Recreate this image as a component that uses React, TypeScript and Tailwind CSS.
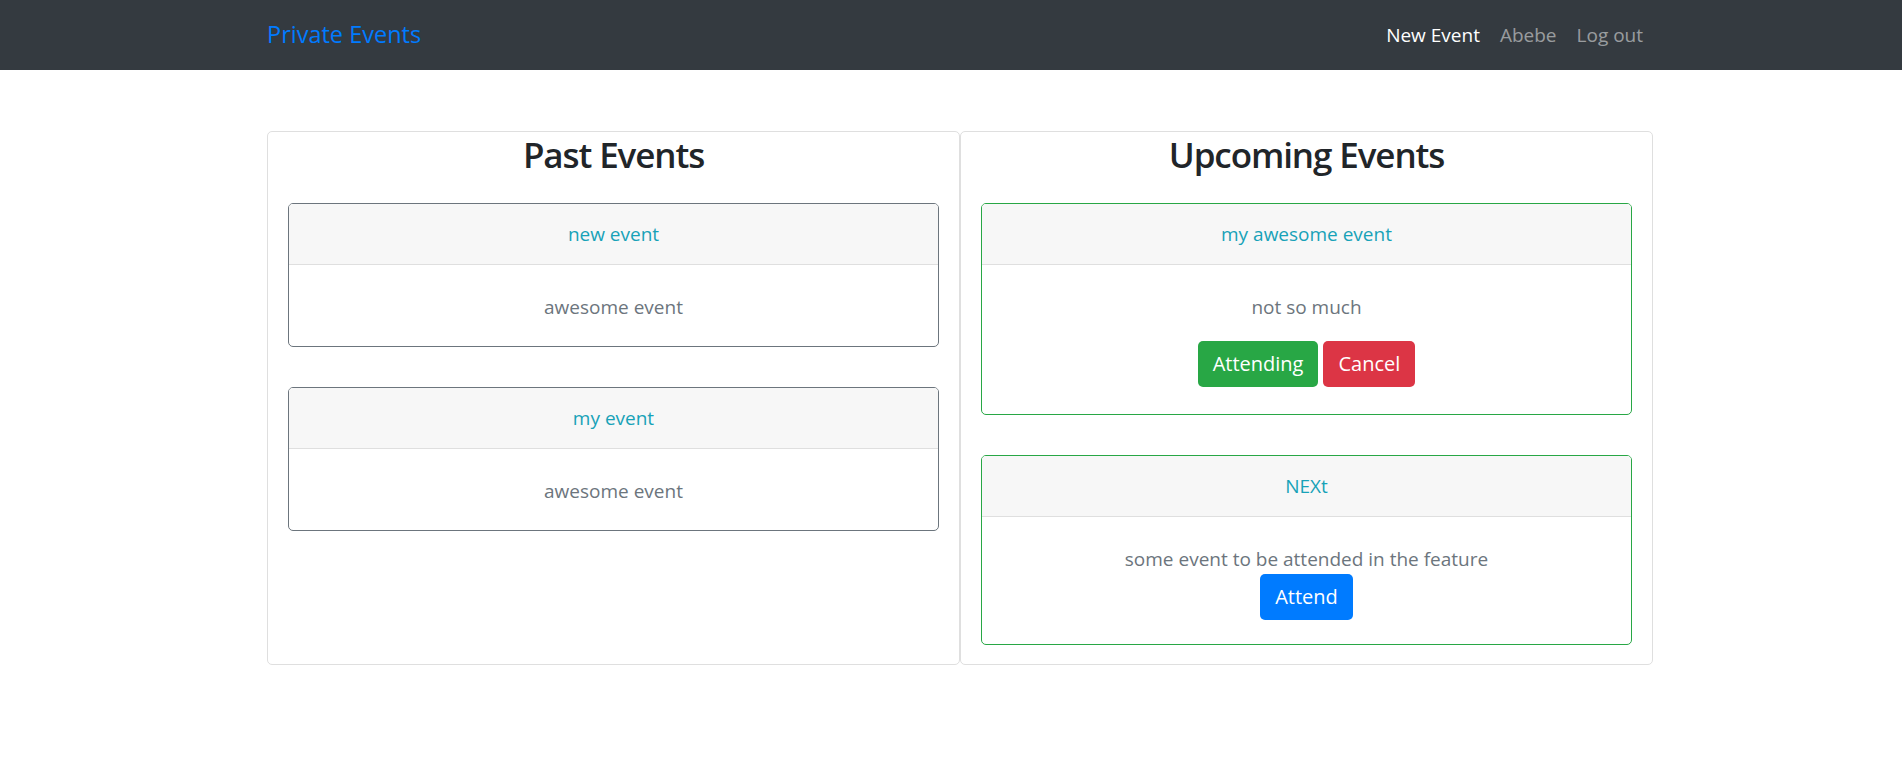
import React from 'react';

type EventItem = {
  title: string;
  description: string;
  actions?: 'attending' | 'attend';
};

const pastEvents: EventItem[] = [
  { title: 'new event', description: 'awesome event' },
  { title: 'my event', description: 'awesome event' },
];

const upcomingEvents: EventItem[] = [
  { title: 'my awesome event', description: 'not so much', actions: 'attending' },
  { title: 'NEXt', description: 'some event to be attended in the feature', actions: 'attend' },
];

function EventCard({ event, tone }: { event: EventItem; tone: 'past' | 'upcoming' }) {
  const border = tone === 'past' ? 'border-[#6c757d]' : 'border-[#28a745]';
  return (
    <div className={`border ${border} rounded-[5px] overflow-hidden`}>
      <div className="bg-[#f7f7f7] border-b border-[#dfdfdf] py-[15px] text-center text-[19px] leading-[30px] text-[#17a2b8]">
        {event.title}
      </div>
      <div className="pt-[27px] pb-[24px] text-center text-[19px] leading-[30px] text-[#6c757d]">
        <p>{event.description}</p>
        {event.actions === 'attending' && (
          <div className="flex justify-center gap-[5px] mt-[19px] mb-[3px]">
            <button className="bg-[#28a745] text-white text-[20px] rounded-[5px] px-[15px] py-[8px] leading-[30px]">Attending</button>
            <button className="bg-[#dc3545] text-white text-[20px] rounded-[5px] px-[15px] py-[8px] leading-[30px]">Cancel</button>
          </div>
        )}
        {event.actions === 'attend' && (
          <div className="flex justify-center">
            <button className="bg-[#007bff] text-white text-[20px] rounded-[5px] px-[15px] py-[8px] leading-[30px]">Attend</button>
          </div>
        )}
      </div>
    </div>
  );
}

function Panel({ title, events, tone }: { title: string; events: EventItem[]; tone: 'past' | 'upcoming' }) {
  return (
    <div className="border border-[#dfdfdf] rounded-[5px] px-[20px] pb-[19px]">
      <h2 className="text-center text-[35px] leading-[46px] font-semibold tracking-[-1.1px] text-[#212529]">{title}</h2>
      <div className="mt-[25px] flex flex-col gap-[40px]">
        {events.map((e) => (
          <EventCard key={e.title} event={e} tone={tone} />
        ))}
      </div>
    </div>
  );
}

export default function App() {
  return (
    <div className="min-h-[779px] bg-white font-['Open_Sans','Noto_Sans',sans-serif]">
      {/* Navbar */}
      <nav className="bg-[#343a40] h-[70px]">
        <div className="ml-[267px] w-[1386px] h-full flex items-center justify-between">
          <a className="text-[23.5px] leading-[30px] text-[#007bff] pb-[2px]">Private Events</a>
          <div className="flex text-[19px] leading-[30px]">
            <a className="px-[10px] text-white">New Event</a>
            <a className="px-[10px] text-white/50">Abebe</a>
            <a className="px-[10px] text-white/50">Log out</a>
          </div>
        </div>
      </nav>

      {/* Events */}
      <div className="ml-[267px] w-[1386px] mt-[61px] grid grid-cols-2">
        <Panel title="Past Events" events={pastEvents} tone="past" />
        <Panel title="Upcoming Events" events={upcomingEvents} tone="upcoming" />
      </div>
    </div>
  );
}
